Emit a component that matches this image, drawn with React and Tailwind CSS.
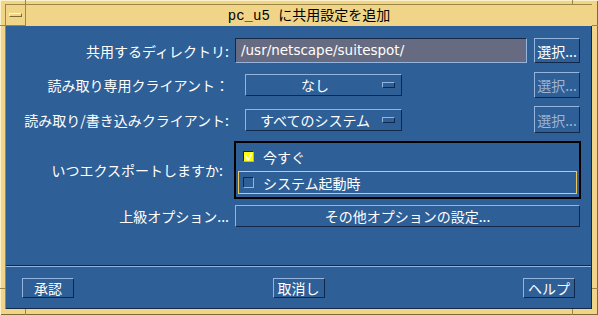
import React from 'react';

const jp = { fontFamily: '"Noto Sans CJK JP", "DejaVu Sans", sans-serif' };

const raised = 'border border-t-[#93b4de] border-l-[#93b4de] border-b-[#12284a] border-r-[#12284a]';
const sunken = 'border border-t-[#12284a] border-l-[#12284a] border-b-[#93b4de] border-r-[#93b4de]';

const Button = ({ children, disabled, className = '' }) => (
  <div
    className={`${raised} flex items-center justify-center text-[14px] leading-none ${
      disabled ? 'text-[#9fb3d1]' : 'text-white'
    } ${className}`}
  >
    {children}
  </div>
);

const OptionMenu = ({ label }) => (
  <div className={`${raised} ml-[16px] w-[157px] h-[22px] flex items-center text-white text-[14px] leading-none`}>
    <span className="flex-1 text-center pl-[2px]">{label}</span>
    <span className={`${raised} w-[13px] h-[6px] mr-[6px]`} />
  </div>
);

const Checkbox = ({ checked }) => (
  <span
    className={`${sunken} w-[11px] h-[11px] flex items-center justify-center ${
      checked ? 'bg-[#ffff00]' : 'bg-[#2f5f97]'
    }`}
  >
    {checked && (
      <svg width="9" height="9" viewBox="0 0 9 9">
        <path d="M1 3 L4 8 L8 1" stroke="#ffffff" strokeWidth="1.5" fill="none" />
      </svg>
    )}
  </span>
);

const Label = ({ children, className = '' }) => (
  <div className={`w-[223px] text-right text-white text-[14px] leading-none ${className}`}>{children}</div>
);

export default function App() {
  return (
    <div
      style={jp}
      className="relative w-[598px] h-[315px] bg-[#f0d488] pt-[4px] pl-[5px] pr-[6px] pb-[6px] shadow-[inset_1px_1px_0_#fcf1cb,inset_-1px_-1px_0_#7c6a32]"
    >
      {/* resize handle ticks */}
      <div className="absolute left-[25px] top-0 w-px h-[4px] bg-[#9c8644]" />
      <div className="absolute right-[25px] top-0 w-px h-[4px] bg-[#9c8644]" />
      <div className="absolute left-0 top-[25px] w-[5px] h-px bg-[#9c8644]" />
      <div className="absolute right-0 top-[25px] w-[6px] h-px bg-[#9c8644]" />
      <div className="absolute left-0 top-[288px] w-[5px] h-px bg-[#9c8644]" />
      <div className="absolute right-0 top-[288px] w-[6px] h-px bg-[#9c8644]" />
      <div className="absolute left-[25px] bottom-0 w-px h-[6px] bg-[#9c8644]" />
      <div className="absolute right-[25px] bottom-0 w-px h-[6px] bg-[#9c8644]" />

      <div className="h-full flex flex-col border-t border-l border-[#9c8644]">
        {/* title bar */}
        <div className="h-[21px] flex">
          <div className="w-[20px] border-r border-b border-[#9c8644] flex items-center justify-center">
            <span className="w-[13px] h-[4px] border border-t-[#fff7da] border-l-[#fff7da] border-b-[#7c6a32] border-r-[#7c6a32]" />
          </div>
          <div
            className="flex-1 flex items-center justify-center text-black text-[14px] leading-none"
            style={{ fontFamily: '"Liberation Mono", "Noto Sans CJK JP", monospace' }}
          >
            pc_u5 に共用設定を追加
          </div>
        </div>

        {/* body */}
        <div className="flex-1 bg-[#2f5f97] flex flex-col border-b border-r border-[#13294a]">
          <div className="flex items-center mt-[12px]">
            <Label>共用するディレクトリ:</Label>
            <div
              className={`${sunken} ml-[6px] w-[292px] h-[25px] bg-[#676b82] flex items-center pl-[5px] text-white text-[13.5px]`}
              style={{ fontFamily: '"DejaVu Sans", sans-serif' }}
            >
              /usr/netscape/suitespot/
            </div>
            <Button className="ml-[7px] w-[46px] h-[25px]">選択...</Button>
          </div>

          <div className="flex items-center mt-[9px]">
            <Label>読み取り専用クライアント：</Label>
            <OptionMenu label="なし" />
            <Button disabled className="ml-[132px] w-[46px] h-[26px]">選択...</Button>
          </div>

          <div className="flex items-center mt-[8px]">
            <Label>読み取り/書き込みクライアント:</Label>
            <OptionMenu label="すべてのシステム" />
            <Button disabled className="ml-[132px] w-[46px] h-[27px]">選択...</Button>
          </div>

          <div className="flex items-center mt-[8px]">
            <Label className="pr-[6px]">いつエクスポートしますか:</Label>
            <div className="ml-[5px] w-[347px] h-[58px] border-2 border-black p-[2px] flex flex-col gap-[3px]">
              <div className="h-[23px] flex items-center pl-[4px] border border-transparent text-white text-[14px] leading-none">
                <Checkbox checked />
                <span className="ml-[9px]">今すぐ</span>
              </div>
              <div className="h-[23px] flex items-center pl-[4px] border border-[#eec75c] text-white text-[14px] leading-none">
                <Checkbox />
                <span className="ml-[9px]">システム起動時</span>
              </div>
            </div>
          </div>

          <div className="flex items-center mt-[6px]">
            <Label>上級オプション...</Label>
            <Button className="ml-[6px] w-[345px] h-[22px]">その他オプションの設定...</Button>
          </div>

          <div className="mt-auto border-t border-[#13294a]" />
          <div className="border-t border-[#93b4de]" />
          <div className="h-[41px] flex items-center justify-between px-[16px]">
            <Button className="w-[52px] h-[20px]">承認</Button>
            <Button className="w-[52px] h-[20px]">取消し</Button>
            <Button className="w-[52px] h-[20px]">ヘルプ</Button>
          </div>
        </div>
      </div>
    </div>
  );
}
